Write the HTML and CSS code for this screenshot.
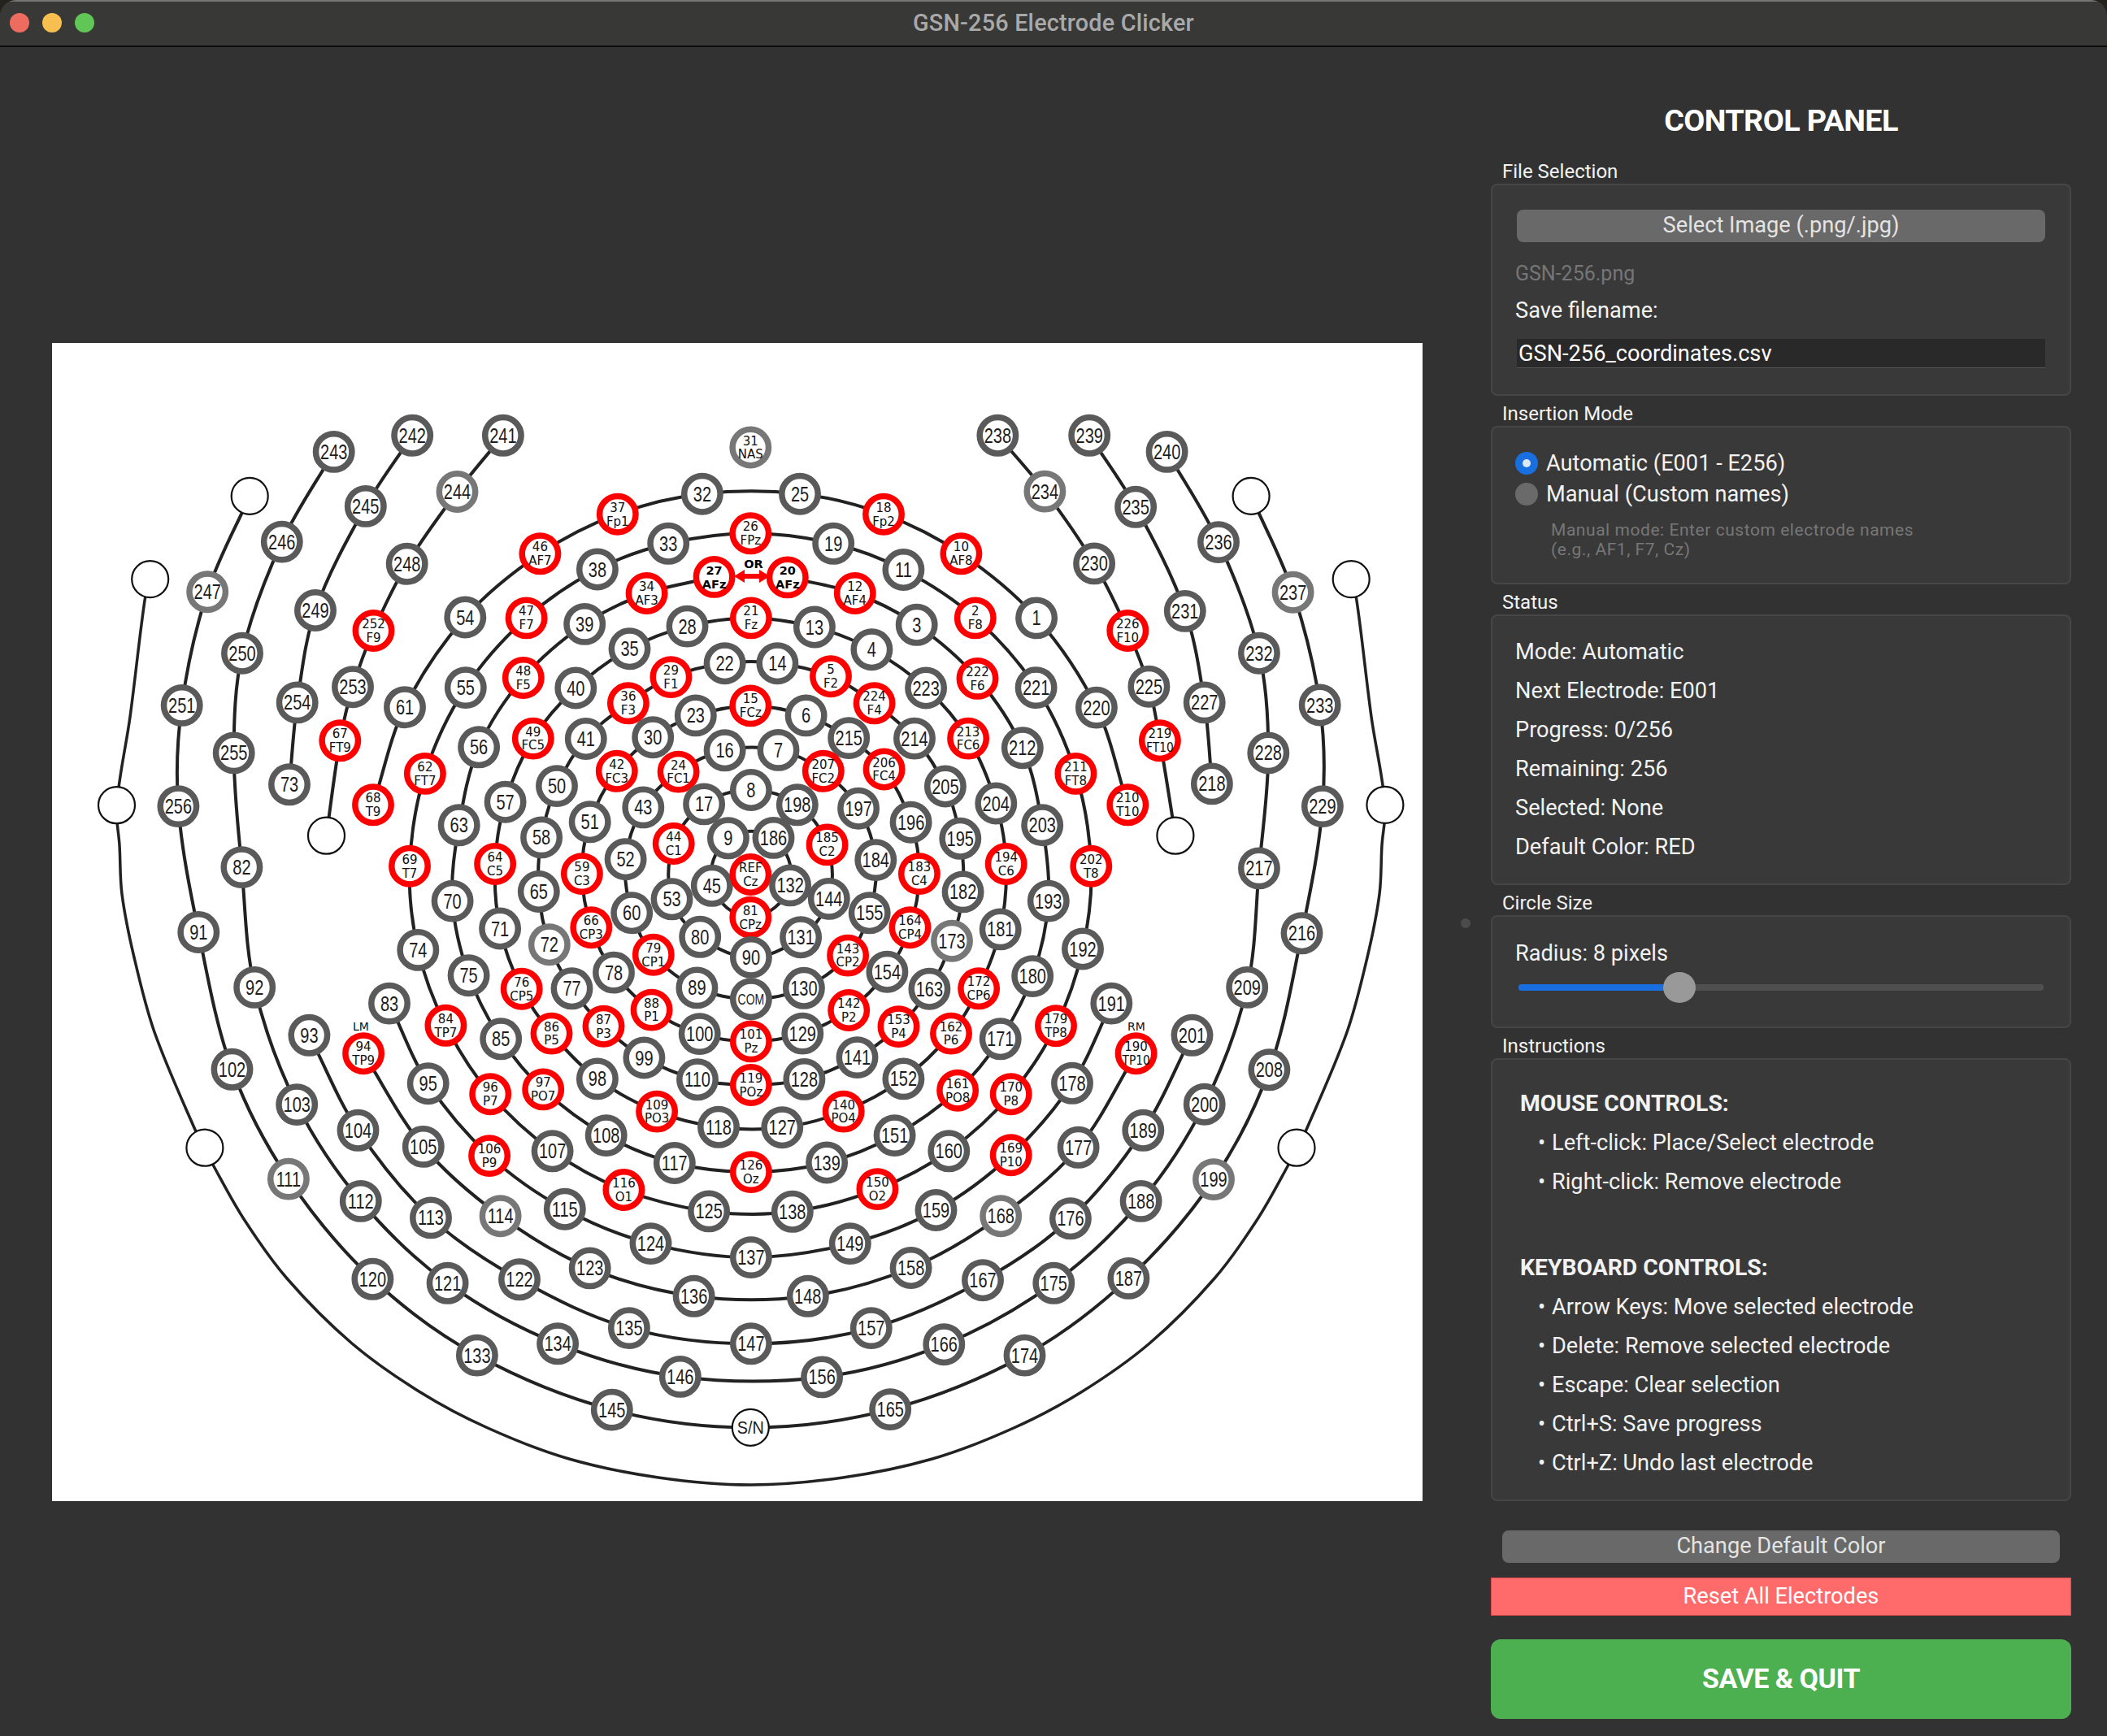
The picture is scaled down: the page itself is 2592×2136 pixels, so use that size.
FILE: index.html
```html
<!DOCTYPE html>
<html lang="en">
<head>
<meta charset="utf-8">
<title>GSN-256 Electrode Clicker</title>
<link rel="stylesheet" href="styles.css">
</head>
<body>
<div class="window">
  <header class="titlebar">
    <div class="lights"><span class="light red"></span><span class="light yellow"></span><span class="light green"></span></div>
    <div class="wintitle">GSN-256 Electrode Clicker</div>
  </header>
  <main class="main">
    <section class="canvas-area">
      <svg id="map" class="map" viewBox="64 422 1686 1425" width="1686" height="1425" xmlns="http://www.w3.org/2000/svg"></svg>
    </section>
    <span class="handle"></span>
    <aside class="panel">
      <h1 class="panel-title">CONTROL PANEL</h1>

      <div class="group-label">File Selection</div>
      <div class="group g-file">
        <div class="btn btn-select">Select Image (.png/.jpg)</div>
        <div class="filename">GSN-256.png</div>
        <div class="save-label">Save filename:</div>
        <div class="input">GSN-256_coordinates.csv</div>
      </div>

      <div class="group-label">Insertion Mode</div>
      <div class="group g-mode">
        <div class="radio-row"><span class="radio on"></span><span>Automatic (E001 - E256)</span></div>
        <div class="radio-row"><span class="radio"></span><span>Manual (Custom names)</span></div>
        <div class="hint">Manual mode: Enter custom electrode names<br>(e.g., AF1, F7, Cz)</div>
      </div>

      <div class="group-label">Status</div>
      <div class="group g-status">
        <div class="line">Mode: Automatic</div>
        <div class="line">Next Electrode: E001</div>
        <div class="line">Progress: 0/256</div>
        <div class="line">Remaining: 256</div>
        <div class="line">Selected: None</div>
        <div class="line">Default Color: RED</div>
      </div>

      <div class="group-label">Circle Size</div>
      <div class="group g-size">
        <div class="radius">Radius: 8 pixels</div>
        <div class="slider"><div class="track"><div class="fill"></div></div><span class="thumb"></span></div>
      </div>

      <div class="group-label">Instructions</div>
      <div class="group g-help">
        <div class="line head">MOUSE CONTROLS:</div>
        <div class="line item"><span class="dot">•</span><span>Left-click: Place/Select electrode</span></div>
        <div class="line item"><span class="dot">•</span><span>Right-click: Remove electrode</span></div>
        <div class="line head second">KEYBOARD CONTROLS:</div>
        <div class="line item"><span class="dot">•</span><span>Arrow Keys: Move selected electrode</span></div>
        <div class="line item"><span class="dot">•</span><span>Delete: Remove selected electrode</span></div>
        <div class="line item"><span class="dot">•</span><span>Escape: Clear selection</span></div>
        <div class="line item"><span class="dot">•</span><span>Ctrl+S: Save progress</span></div>
        <div class="line item"><span class="dot">•</span><span>Ctrl+Z: Undo last electrode</span></div>
      </div>

      <div class="btn btn-color">Change Default Color</div>
      <div class="btn-reset">Reset All Electrodes</div>
      <div class="btn-save">SAVE &amp; QUIT</div>
    </aside>
  </main>
</div>
<script src="script.js"></script>
</body>
</html>
```

FILE: styles.css
```css
* { box-sizing: border-box; }
html, body { margin: 0; padding: 0; }
body {
  width: 2592px; height: 2136px; overflow: hidden; background: #23231c;
  font-family: Roboto, "Liberation Sans", sans-serif; font-size: 27.2px; color: #f2f2f2;
}
.window { width: 2592px; height: 2136px; background: #323232; border-radius: 20px 20px 0 0; overflow: hidden; display: flex; flex-direction: column; }
.titlebar {
  height: 58px; flex: none; position: relative; display: flex; align-items: center; justify-content: center;
  background: #383836; border-top: 2px solid #767676; border-bottom: 2px solid #0c0c0c;
}
.lights { position: absolute; left: 12px; top: 14px; display: flex; gap: 16px; }
.light { width: 24px; height: 24px; border-radius: 50%; display: block; }
.light.red { background: #ee6b60; }
.light.yellow { background: #f6bf4f; }
.light.green { background: #60c655; }
.wintitle { font-size: 28.8px; font-weight: 500; color: #a9a9a9; letter-spacing: .2px; margin-top: -2px; }

.main { flex: 1; display: flex; position: relative; }
.canvas-area { width: 1750px; flex: none; padding: 364px 0 0 64px; }
.map { display: block; background: #fff; }
.handle { position: absolute; left: 1797px; top: 1072px; width: 12px; height: 12px; border-radius: 50%; background: #4b4b4b; }

.panel { width: 714px; margin-left: 84px; flex: none; padding-top: 69px; }
.panel-title { margin: 0 0 31px; height: 40px; line-height: 42px; font-size: 37.8px; font-weight: 700; color: #fff; text-align: center; letter-spacing: -.6px; }
.group-label { height: 26px; line-height: 27px; padding-left: 14px; margin-bottom: 2px; font-size: 24px; color: #f2f2f2; }
.group { background: #393939; border: 2px solid #464646; border-radius: 8px; padding: 0 28px; margin-bottom: 9px; }

.btn { background: #696969; color: #e3e3e3; border-radius: 8px; text-align: center; height: 40px; line-height: 38px; }
.g-file { height: 261px; padding-top: 30px; }
.btn-select { margin: 0 2px; }
.filename { margin-top: 24px; height: 30px; line-height: 30px; font-size: 25px; color: #767676; }
.save-label { margin-top: 15px; height: 30px; line-height: 31px; }
.input { margin: 20px 2px 0; height: 36px; line-height: 37px; padding-left: 2px; background: #292929; border-bottom: 1px solid #555; color: #fff; }

.g-mode { height: 195px; padding-top: 28px; }
.radio-row { display: flex; align-items: center; gap: 10px; height: 32px; margin-bottom: 6px; }
.radio { width: 28px; height: 28px; border-radius: 50%; background: #6a6a6a; display: block; position: relative; flex: none; }
.radio.on { background: #1a6fe0; }
.radio.on::after { content: ""; position: absolute; left: 9px; top: 9px; width: 10px; height: 10px; border-radius: 50%; background: #dbe9fb; }
.hint { margin-top: 16px; margin-left: 28px; padding-left: 16px; font-size: 21px; line-height: 24px; color: #777; letter-spacing: .55px; }

.g-status { height: 333px; padding-top: 20px; }
.line { height: 48px; line-height: 48px; }

.g-size { height: 139px; padding-top: 29px; }
.radius { height: 32px; line-height: 32px; }
.slider { position: relative; height: 40px; margin: 6px 4px 0; display: flex; align-items: center; }
.track { width: 100%; height: 8px; border-radius: 4px; background: #505050; overflow: hidden; }
.fill { width: 198px; height: 8px; background: #1a6fe0; }
.thumb { position: absolute; left: 178px; top: 1px; width: 40px; height: 38px; border-radius: 50%; background: #999; }

.g-help { height: 545px; padding-top: 30.2px; }
.head { font-weight: 700; margin-left: 6px; font-size: 28.3px; }
.head.second { margin-top: 58px; }
.item { display: flex; margin-left: 28px; }
.dot { width: 17px; flex: none; }

.btn-color { margin: 36px 14px 0; }
.btn-reset { margin-top: 18px; height: 47px; line-height: 45px; text-align: center; background: #ff6b6b; border: 1px solid #d94b4b; color: #fff; }
.btn-save { margin-top: 29px; height: 98px; line-height: 96px; text-align: center; background: #4caf50; border-radius: 12px; color: #fff; font-size: 34px; font-weight: 700; letter-spacing: -.5px; }

.wire { fill: none; stroke: #222; stroke-width: 4; }
.wire.outer { stroke-width: 3.5; }
.node { fill: #fff; stroke: #5a5a5a; stroke-width: 7.5; }
.node.light { stroke: #777; }
.node.hot { stroke: #f00; stroke-width: 7.5; }
.node.blank { stroke: #111; stroke-width: 2.2; }
.num { font-family: "Liberation Sans", Arial, sans-serif; font-size: 25px; fill: #1e1e1e; text-anchor: middle; }
.small { font-family: "DejaVu Sans", Verdana, sans-serif; font-size: 15px; fill: #111; text-anchor: middle; }
.small.bold { font-weight: 700; fill: #000; font-size: 14.5px; }
.tiny { font-size: 14px; }
.com { font-size: 18px; }
.sn { font-size: 22px; }
.arrow { fill: #f00; }
```

FILE: script.js
```js
// Electrode table: id,x,y[,sublabel[,flag]] in source-sheet coordinates, one block per sheet quadrant.
var SX = 850 / 1568, SY = 700 / 1568;
var SHEETS = [
  [60, 480, '241,1031,125 242,825,125 243,647,170 b1,456,292 244,927,280,,l 245,719,320 246,529,418 247,360,556,,l b2,230,521 248,813,479 249,605,607 250,439,725 251,302,869 252,737,663,F9 253,690,818 254,564,861 255,420,1000 256,294,1147 b3,154,1144 b4,630,1228 73,546,1087 67,661,966,FT9 68,736,1143,T9 61,808,874 62,854,1057,FT7 54,945,626 55,946,820 56,976,984 57,1036,1135 63,931,1199 69,819,1312,T7 70,916,1408 64,1013,1306,C5 65,1112,1382 71,1024,1484 37,1291,342,Fp1 46,1115,451,AF7 47,1084,628,F7 48,1077,793,F5 49,1099,960,FC5 38,1245,494 39,1216,645 40,1196,821 41,1219,961 50,1153,1091 58,1118,1233 59,1210,1333,C3 51,1228,1190 52,1309,1293 60,1323,1441 66,1231,1481,CP3 32,1483,286 33,1406,423 34,1357,560,AF3 35,1318,713 36,1315,863,F3 42,1289,1050,FC3 43,1349,1150 44,1418,1250,C1 53,1414,1403 45,1505,1366 80,1478,1507 28,1449,651 29,1412,791,F1 30,1371,957 23,1468,897 24,1429,1052,FC1 17,1487,1141 16,1534,993 22,1534,753 27,1510,515,AFz,b 9,1542,1235 91,340,1494 82,438,1315'],
  [900, 480, '31,43,158,NAS,l 238,604,125 239,812,125 240,988,170 b5,1179,292 234,711,279,,l 235,917,322 236,1105,419 230,823,478 237,1274,557,,l b6,1406,521 25,155,286 18,345,342,Fp2 26,43,395,FPz 19,231,423 10,521,451,AF8 11,390,495 20,127,516,AFz,b 12,280,560,AF4 21,44,628,Fz 13,188,653 3,420,647 2,553,628,F8 1,692,628 226,899,663,F10 231,1029,609 232,1197,725 4,318,715 14,104,753 5,225,789,F2 222,558,795,F6 221,691,820 225,947,817 227,1073,861 233,1335,868 223,441,821 224,324,863,F4 15,43,870,FCz 6,169,897 220,828,875 213,537,960,FC6 212,660,986 215,266,959 214,415,960 219,972,966,FT10 228,1218,1000 7,106,992 207,208,1050,FC2 206,346,1045,FC4 211,781,1057,FT8 218,1090,1085 8,44,1102 205,485,1092 198,149,1143 197,288,1153 210,899,1143,T10 229,1341,1147 b7,1483,1143 204,600,1139 196,407,1191 186,95,1234 185,217,1253,C2 195,519,1236 203,705,1199 b8,1007,1228 184,327,1295 194,623,1306,C6 202,816,1312,T8 217,1197,1318 REF,43,1335,Cz 183,426,1333,C4 132,133,1365 182,525,1383 144,221,1402 193,719,1408 155,313,1441 81,43,1453,CPz 164,405,1481,CP4 181,610,1486 216,1294,1497 131,157,1508 173,500,1518,,l 192,797,1540'],
  [60, 1160, '74,838,20 72,1136,5,,l 79,1372,33,CP1 75,953,90 78,1282,82 76,1073,127,CP5 77,1187,126 89,1471,124 92,467,123 83,773,167 88,1368,185,P1 84,901,228,TP7 87,1259,230,P3 100,1477,251 93,591,255 86,1141,250,P5 85,1026,265 94,714,305,TP9 99,1351,317 102,416,349 110,1472,377 98,1245,375 95,861,388 97,1122,404,PO7 96,1002,417,P7 103,563,446 109,1380,465,PO3 118,1520,508 104,702,517 108,1265,531 105,850,562 b9,354,565 107,1143,574 106,1000,587,P9 117,1420,607 111,544,651,,l 116,1305,681,O1 112,708,712 115,1171,734 125,1498,740 114,1025,753,,l 113,867,758 124,1366,829 123,1228,897 120,735,927 122,1068,928 121,905,938 136,1464,974 135,1317,1062 134,1155,1105 133,972,1137 146,1433,1196 145,1278,1287'],
  [900, 1160, '90,44,40 143,264,35,CP2 154,353,80 180,683,92 130,164,125 163,449,127 172,561,126,CP6 209,1170,123 COM,44,155 191,862,167 142,266,186,P2 153,379,231,P4 179,736,229,TP8 129,161,250 201,1045,255 162,498,250,P6 171,610,265 101,44,272,Pz 190,918,305,TP10 141,285,316 208,1220,350 128,165,376 152,390,375 178,773,387 119,44,392,POz 161,513,407,PO8 170,634,417,P8 200,1073,445 140,254,465,PO4 127,115,509 189,934,517 151,370,531 177,787,564 b10,1282,565 160,493,574 169,634,585,P10 139,216,606 126,44,632,Oz 199,1094,652,,l 150,331,679,O2 188,929,712 138,138,741 159,464,737 168,611,753,,l 176,769,760 149,269,829 137,44,867 158,407,896 187,901,925 167,570,930 175,731,938 148,173,974 157,317,1062 147,44,1105 166,482,1107 174,665,1137 156,205,1197 165,360,1286 S/N,43,1336']
];

// Way-points of the outermost arc, which carries no electrode along its bottom.
var ARC_L = [[263,1435],[300,1500],[353,1573],[433,1653],[517,1713],[600,1757],[700,1795],[810,1818]];
var SIDE_L = [[147,1040],[150,1100],[165,1178],[190,1270],[240,1390]];
var TOP_L = [[178,739],[160,882]];
var MIRROR = 1847;

function mirror(list) {
  return list.slice().reverse().map(function (p) { return [MIRROR - p[0], p[1]]; });
}

var nodes = {};
function guides(prefix, list) {
  return list.map(function (p, i) {
    var name = prefix + i;
    nodes[name] = { x: p[0], y: p[1] };
    return name;
  }).join(' ');
}

var ARC = ARC_L.concat([[923.5, 1827]], mirror(ARC_L));

// Wires that join the electrodes. A leading "o " marks a closed loop.
var WIRES = [
  'b2 ' + guides('u', TOP_L) + ' b3 ' + guides('s', SIDE_L) + ' b9 ' + guides('g', ARC) + ' b10 ' + guides('t', mirror(SIDE_L)) + ' b7 ' + guides('v', mirror(TOP_L)) + ' b6',
  'b1 247 251 256 91 102 111 120 133 145 S/N 165 174 187 199 208 216 229 233 237 b5',
  '243 246 250 255 82 92 103 112 121 134 146 156 166 175 188 200 209 217 228 232 236 240',
  '242 245 249 254 73',
  '239 235 231 227 218',
  '93 104 113 122 135 147 157 167 176 189 201',
  '241 244 248 252 253 67 b4',
  '238 234 230 226 225 219 b8',
  '94 105 114 123 136 148 158 168 177 190',
  '68 61 54 46 37 32 25 18 10 1 220 210',
  '83 95 106 115 124 137 149 159 169 178 191',
  'o 69 62 55 47 38 33 26 19 11 2 221 211 202 192 179 170 160 150 138 125 116 107 96 84 74',
  '20 12 3 222 212 203 193 180 171 161 151 139 126 117 108 97 85 75 70 63 56 48 39 34 27',
  'o 64 57 49 40 35 28 21 13 4 223 213 204 194 181 172 162 152 140 127 118 109 98 86 76 71',
  'o 65 58 50 41 36 29 22 14 5 224 214 205 195 182 173 163 153 141 128 119 110 99 87 77 72',
  'o 59 51 42 30 23 15 6 215 206 196 183 164 154 142 129 101 100 88 78 66',
  'o 52 43 24 16 7 207 197 184 155 143 130 COM 89 79 60',
  'o 44 17 8 198 185 144 131 90 80 53',
  'o 9 186 132 81 45'
];

var NS = 'http://www.w3.org/2000/svg';
var svg = document.getElementById('map');

function el(name, attrs, text) {
  var e = document.createElementNS(NS, name);
  for (var k in attrs) e.setAttribute(k, attrs[k]);
  if (text !== undefined) e.textContent = text;
  svg.appendChild(e);
  return e;
}

function label(str, x, y, cls, sx) {
  el('text', { 'class': cls, transform: 'translate(' + x.toFixed(1) + ' ' + y.toFixed(1) + ') scale(' + sx + ' 1)' }, str);
}

var order = [];
SHEETS.forEach(function (s) {
  s[2].split(' ').forEach(function (item) {
    var f = item.split(',');
    var n = { id: f[0], x: s[0] + f[1] * SX, y: s[1] + f[2] * SY, sub: f[3] || '', flag: f[4] || '' };
    nodes[n.id] = n;
    order.push(n);
  });
});

function spline(names, closed) {
  var p = names.map(function (k) { return nodes[k]; });
  var n = p.length;
  function at(i) {
    if (closed) return p[(i + n) % n];
    return p[Math.max(0, Math.min(n - 1, i))];
  }
  function dir(i) {
    var a = at(i - 1), c = at(i + 1);
    var dx = c.x - a.x, dy = c.y - a.y, len = Math.sqrt(dx * dx + dy * dy) || 1;
    return { x: dx / len, y: dy / len };
  }
  var d = 'M' + p[0].x.toFixed(1) + ' ' + p[0].y.toFixed(1);
  var last = closed ? n : n - 1;
  for (var i = 0; i < last; i++) {
    var b = at(i), c = at(i + 1), t0 = dir(i), t1 = dir(i + 1);
    var len = Math.sqrt((c.x - b.x) * (c.x - b.x) + (c.y - b.y) * (c.y - b.y)) / 3;
    d += 'C' + (b.x + t0.x * len).toFixed(1) + ' ' + (b.y + t0.y * len).toFixed(1) + ' ' +
      (c.x - t1.x * len).toFixed(1) + ' ' + (c.y - t1.y * len).toFixed(1) + ' ' +
      c.x.toFixed(1) + ' ' + c.y.toFixed(1);
  }
  return d + (closed ? 'Z' : '');
}

WIRES.forEach(function (w, i) {
  var names = w.split(' ');
  var closed = names[0] === 'o';
  if (closed) names.shift();
  el('path', { 'class': i === 0 ? 'wire outer' : 'wire', d: spline(names, closed) });
});

order.forEach(function (n) {
  var blank = /^b\d/.test(n.id) || n.id === 'S/N';
  var hot = n.sub && n.flag !== 'l';
  var cls = 'node' + (blank ? ' blank' : '') + (hot ? ' hot' : '') + (n.flag === 'l' ? ' light' : '');
  el('circle', { 'class': cls, cx: n.x.toFixed(1), cy: n.y.toFixed(1), r: blank ? 22.5 : 22.2 });
  if (n.sub) {
    var bold = n.flag === 'b' ? ' bold' : '';
    label(n.id, n.x, n.y - 3, 'small' + bold, 1);
    label(n.sub, n.x, n.y + 13.8, 'small' + bold, n.sub.length > 3 ? 0.92 : 1);
  } else if (n.id === 'COM') {
    label(n.id, n.x, n.y + 6.5, 'num com', 0.78);
  } else if (n.id === 'S/N') {
    label(n.id, n.x, n.y + 8, 'num sn', 0.9);
  } else if (!blank) {
    label(n.id, n.x, n.y + 9, 'num', 0.8);
  }
});

el('text', { 'class': 'small tiny', x: 444, y: 1268 }, 'LM');
el('text', { 'class': 'small tiny', x: 1398, y: 1268 }, 'RM');
el('text', { 'class': 'small bold', x: 927, y: 699 }, 'OR');
el('path', { 'class': 'arrow', d: 'M903 709l13-8v5h18v-5l13 8-13 8v-5h-18v5z' });
```
